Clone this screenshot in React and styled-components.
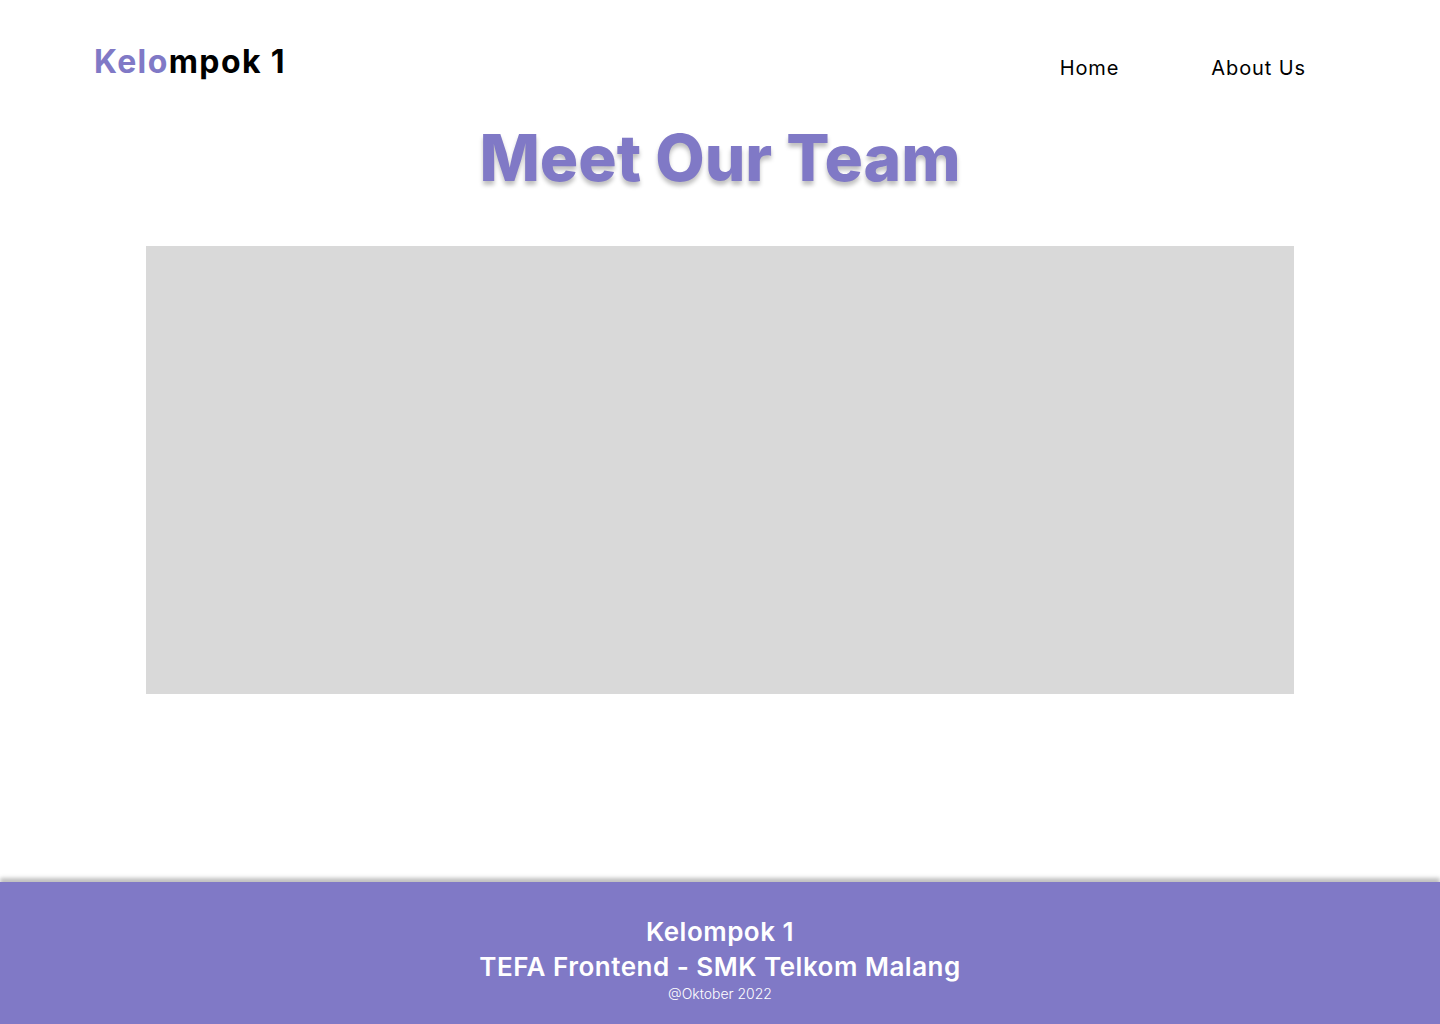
import React from "react";
import styled, { createGlobalStyle } from "styled-components";

const GlobalStyle = createGlobalStyle`
  * { box-sizing: border-box; }
  body {
    margin: 0;
    background: #ffffff;
    font-family: "Inter", "Noto Sans", sans-serif;
  }
`;

const Page = styled.div`
  min-height: 1024px;
  display: flex;
  flex-direction: column;
`;

const Header = styled.header`
  display: flex;
  align-items: flex-start;
  justify-content: space-between;
  padding: 42px 134px 0 94px;
  height: 104px;
`;

const Logo = styled.h1`
  margin: 0;
  font-size: 32px;
  font-weight: 700;
  line-height: 40px;
  color: #000;
  letter-spacing: 1.4px;
  span {
    color: #8079c6;
  }
`;

const Nav = styled.nav`
  display: flex;
  gap: 92px;
  padding-top: 12px;
  a {
    font-size: 20px;
    font-weight: 400;
    line-height: 28px;
    color: #000;
    text-decoration: none;
    letter-spacing: 0.9px;
  }
`;

const Title = styled.h2`
  margin: 14px 0 0;
  text-align: center;
  font-size: 64px;
  font-weight: 800;
  line-height: 80px;
  color: #8079c6;
  text-shadow: 0 4px 4px rgba(0, 0, 0, 0.25);
`;

const Main = styled.main`
  flex: 1;
  display: flex;
  justify-content: center;
  padding: 48px 0 188px;
`;

const Placeholder = styled.div`
  width: 1148px;
  height: 448px;
  background: #d9d9d9;
`;

const Footer = styled.footer`
  background: #8079c6;
  box-shadow: 0 -4px 4px rgba(0, 0, 0, 0.25);
  height: 142px;
  display: flex;
  flex-direction: column;
  align-items: center;
  padding-top: 32px;
  color: #ffffff;
  text-align: center;
`;

const FooterLine = styled.div`
  font-size: ${(p) => p.size}px;
  font-weight: ${(p) => p.weight};
  line-height: ${(p) => p.lh}px;
  letter-spacing: ${(p) => p.ls || 0}px;
`;

export default function App() {
  return (
    <>
      <GlobalStyle />
      <Page>
        <Header>
          <Logo>
            <span>Kelo</span>mpok 1
          </Logo>
          <Nav>
            <a href="#">Home</a>
            <a href="#">About Us</a>
          </Nav>
        </Header>
        <Title>Meet Our Team</Title>
        <Main>
          <Placeholder />
        </Main>
        <Footer>
          <FooterLine size={26} weight={600} lh={36} ls={0.5}>
            Kelompok 1
          </FooterLine>
          <FooterLine size={26} weight={600} lh={34} ls={0.5}>
            TEFA Frontend - SMK Telkom Malang
          </FooterLine>
          <FooterLine size={14} weight={300} lh={20}>
            @Oktober 2022
          </FooterLine>
        </Footer>
      </Page>
    </>
  );
}
